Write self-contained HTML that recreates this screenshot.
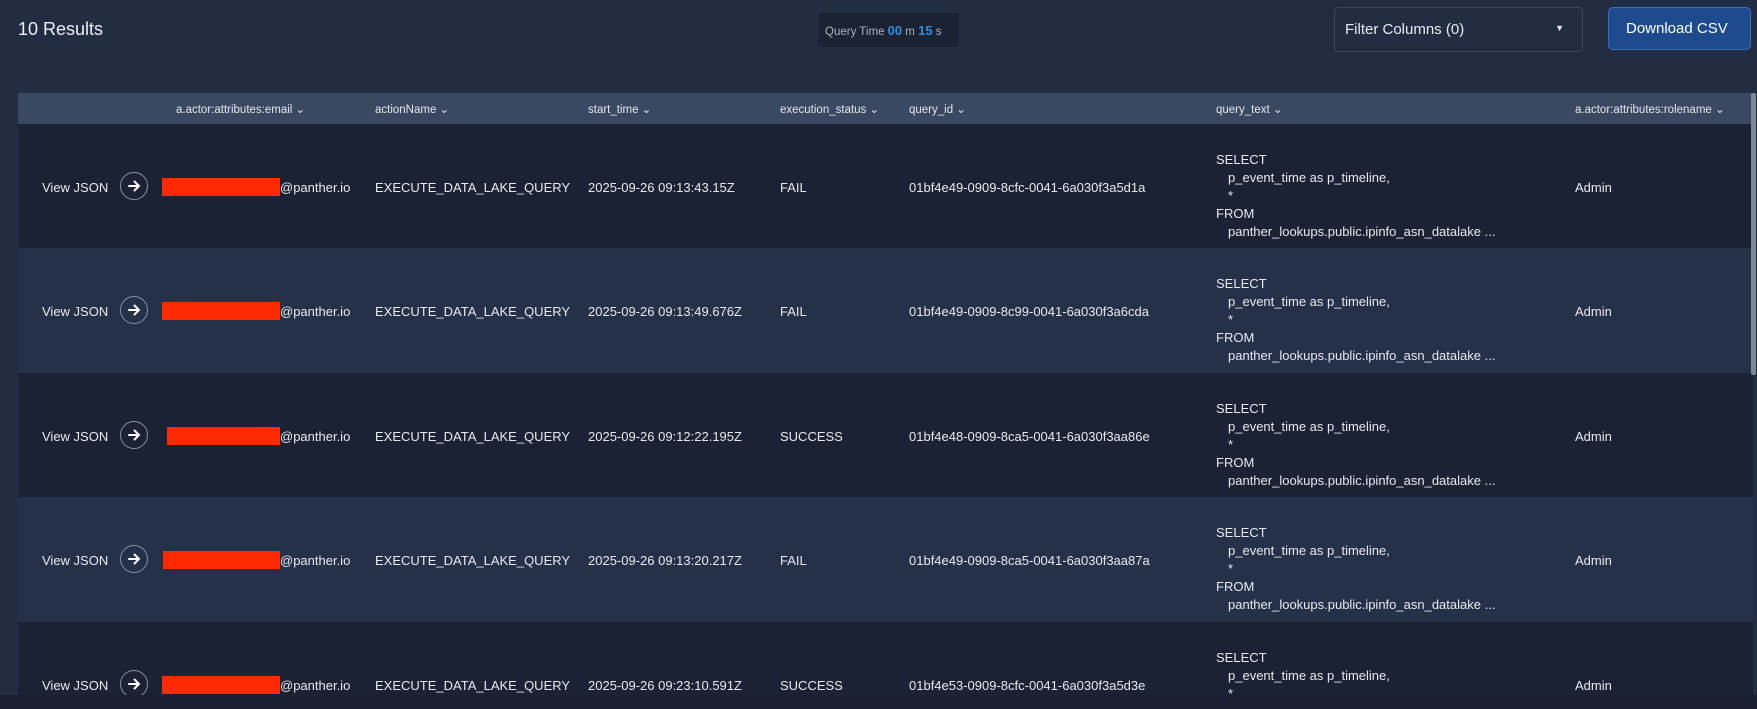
<!DOCTYPE html>
<html><head><meta charset="utf-8"><style>
*{margin:0;padding:0;box-sizing:border-box}
html,body{width:1757px;height:709px;overflow:hidden}
body{background:#222c43;font-family:"Liberation Sans",sans-serif;color:#e6e9ef;position:relative}
.a{position:absolute;white-space:nowrap}
.hdr{position:absolute;left:18px;top:93px;width:1735px;height:31px;background:#3a4861}
.hdr span{position:absolute;top:9px;font-size:11.5px;color:#e3e7ee}
.row{position:absolute;left:0;width:1735px;height:125px;overflow:hidden}
.row span{position:absolute;font-size:13px;color:#e6e9ef;white-space:nowrap}
.circ{position:absolute;width:28px;height:28px;border:1px solid #8591a6;border-radius:50%}
.red{position:absolute;height:18px;background:#ff2a00}
#rows{position:absolute;left:18px;top:124px;width:1735px;height:571px;overflow:hidden}
</style></head><body>
<div class="a" style="left:18px;top:19px;font-size:18px;color:#eef0f4">10 Results</div>
<div class="a" style="left:818px;top:13px;width:141px;height:34px;background:#1b2232;border-radius:3px;font-size:11.5px;color:#aab2c0;padding:10px 0 0 7px">Query Time <b style="color:#2f8ee0;font-size:13px">00</b> m <b style="color:#2f8ee0;font-size:13px">15</b> s</div>
<div class="a" style="left:1334px;top:7px;width:249px;height:45px;border:1px solid #3b475d;border-radius:4px;font-size:15px;color:#e8ebf0;padding:13px 0 0 10px">Filter Columns (0)<span style="position:absolute;right:18px;top:15px;font-size:9px">▼</span></div>
<div class="a" style="left:1608px;top:7px;width:143px;height:43px;background:#1e4a8e;border:1px solid #3a70c0;border-radius:5px;font-size:15px;color:#fff;padding:12px 0 0 17px">Download CSV</div>
<div class="hdr">
<span style="left:158px">a.actor:attributes:email ⌄</span>
<span style="left:357px">actionName ⌄</span>
<span style="left:570px">start_time ⌄</span>
<span style="left:762px">execution_status ⌄</span>
<span style="left:891px">query_id ⌄</span>
<span style="left:1198px">query_text ⌄</span>
<span style="left:1557px">a.actor:attributes:rolename ⌄</span>
</div>
<div id="rows"></div>
<div style="position:absolute;left:1751px;top:93px;width:5px;height:282px;background:#7d8797;border-radius:2px"></div>
<div style="position:absolute;left:0;top:695px;width:1757px;height:14px;background:#1a2030"></div>
<script>
var d=[["2025-09-26 09:13:43.15Z","FAIL","01bf4e49-0909-8cfc-0041-6a030f3a5d1a",162],
["2025-09-26 09:13:49.676Z","FAIL","01bf4e49-0909-8c99-0041-6a030f3a6cda",162],
["2025-09-26 09:12:22.195Z","SUCCESS","01bf4e48-0909-8ca5-0041-6a030f3aa86e",167],
["2025-09-26 09:13:20.217Z","FAIL","01bf4e49-0909-8ca5-0041-6a030f3aa87a",163],
["2025-09-26 09:23:10.591Z","SUCCESS","01bf4e53-0909-8cfc-0041-6a030f3a5d3e",162]];
var h="";
d.forEach(function(r,i){
var top=i*124.4;
h+='<div class="row" style="top:'+top+'px;background:'+(i%2?'#253149':'#1b2233')+'">'+
'<span style="left:24px;top:56px">View JSON</span>'+
'<div class="circ" style="left:102px;top:48px"><svg width="26" height="26" viewBox="0 0 26 26"><path d="M8 13h10M13.5 8.5L18 13l-4.5 4.5" stroke="#fff" stroke-width="2" fill="none" stroke-linecap="round"/></svg></div>'+
'<div class="red" style="left:'+(r[3]-18)+'px;width:'+(280-r[3])+'px;top:54px"></div>'+
'<span style="left:262px;top:56px">@panther.io</span>'+
'<span style="left:357px;top:56px">EXECUTE_DATA_LAKE_QUERY</span>'+
'<span style="left:570px;top:56px">'+r[0]+'</span>'+
'<span style="left:762px;top:56px">'+r[1]+'</span>'+
'<span style="left:891px;top:56px">'+r[2]+'</span>'+
'<span style="left:1198px;top:28px">SELECT</span>'+
'<span style="left:1210px;top:46px">p_event_time as p_timeline,</span>'+
'<span style="left:1210px;top:64px">*</span>'+
'<span style="left:1198px;top:82px">FROM</span>'+
'<span style="left:1210px;top:100px">panther_lookups.public.ipinfo_asn_datalake ...</span>'+
'<span style="left:1557px;top:56px">Admin</span></div>';
});
document.getElementById('rows').innerHTML=h;
</script>
</body></html>
